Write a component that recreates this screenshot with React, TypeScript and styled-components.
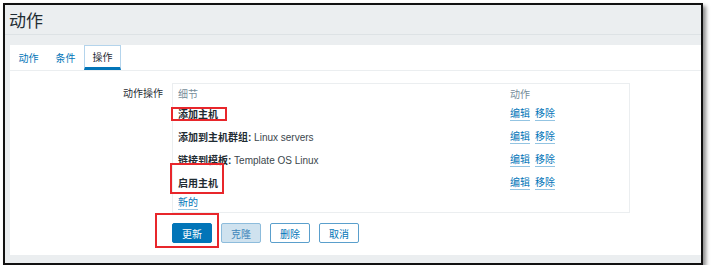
import React from 'react';
import styled, { createGlobalStyle } from 'styled-components';

const GlobalStyle = createGlobalStyle`
    body {
        margin: 0;
        background: #fff;
        font-family: "Liberation Sans", "Noto Sans CJK SC", sans-serif;
        font-size: 10px;
        color: #1f2c33;
    }
`;

const Frame = styled.div`
    position: relative;
    box-sizing: border-box;
    width: 700px;
    height: 262px;
    margin: 3px 0 0 3px;
    border: 2px solid #111;
    background: #ebeef0;
    box-shadow: 3px 3px 4px rgba(0, 0, 0, 0.45);
    display: flex;
    flex-direction: column;
    overflow: hidden;
`;
const Header = styled.div`
    height: 29px;
    padding-left: 4px;
    display: flex;
    align-items: center;
    font-size: 17px;
    color: #1f2c33;
    border-bottom: 1px solid #dde2e5;
`;
const Content = styled.div`
    margin: 10px 0 0 5px;
    height: 210px;
    background: #fff;
    display: flex;
    flex-direction: column;
`;
const TabBar = styled.div`
    display: flex;
    height: 25px;
    border-bottom: 1px solid #ebeef0;
`;
const Tab = styled.div<{ $active?: boolean }>`
    box-sizing: border-box;
    width: 37px;
    height: 25px;
    display: flex;
    align-items: center;
    justify-content: center;
    color: ${p => (p.$active ? '#1f2c33' : '#0275b8')};
    border: ${p => (p.$active ? '1px solid #b4d4ec' : 'none')};
    border-bottom: ${p => (p.$active ? '3px solid #0275b8' : 'none')};
    cursor: pointer;
`;
const Form = styled.div`
    display: grid;
    grid-template-columns: 153px auto;
    column-gap: 9px;
    row-gap: 10px;
    padding-top: 12px;
`;
const Label = styled.div`
    text-align: right;
    padding-top: 4px;
    line-height: 14px;
`;
const Table = styled.div`
    box-sizing: border-box;
    width: 458px;
    height: 130px;
    border: 1px solid #ebeef0;
    padding: 0 5px 2px;
`;
const Row = styled.div<{ $height: number; $pad?: number }>`
    box-sizing: border-box;
    display: grid;
    grid-template-columns: 332px 1fr;
    align-items: center;
    height: ${p => p.$height}px;
    padding-top: ${p => p.$pad || 0}px;
    line-height: 14px;
`;
const HeadCell = styled.div`
    color: #768d99;
`;
const Detail = styled.div`
    color: #3b464c;
`;
const Strong = styled.b`
    color: #1f2c33;
`;
const Actions = styled.div`
    display: flex;
    gap: 5px;
`;
const LinkAction = styled.span`
    display: inline-block;
    color: #0275b8;
    line-height: 12px;
    border-bottom: 1px solid #93c4e2;
    cursor: pointer;
`;
const Buttons = styled.div`
    grid-column: 2;
    display: flex;
    gap: 9px;
`;
const Button = styled.button<{ $variant: 'main' | 'alt' | 'plain' }>`
    box-sizing: border-box;
    width: 40px;
    height: 20px;
    padding: 0;
    border-radius: 2px;
    font-family: inherit;
    font-size: 10px;
    cursor: pointer;
    border: 1px solid ${p => (p.$variant === 'main' ? '#0275b8' : p.$variant === 'alt' ? '#8dbcdc' : '#5a9fcc')};
    background: ${p => (p.$variant === 'main' ? '#0275b8' : p.$variant === 'alt' ? '#cfe2ef' : '#fff')};
    color: ${p => (p.$variant === 'main' ? '#fff' : p.$variant === 'alt' ? '#3f86ba' : '#0275b8')};
`;
const Mark = styled.div<{ $x: number; $y: number; $w: number; $h: number }>`
    position: absolute;
    box-sizing: border-box;
    left: ${p => p.$x}px;
    top: ${p => p.$y}px;
    width: ${p => p.$w}px;
    height: ${p => p.$h}px;
    border: 2px solid #e8262b;
    pointer-events: none;
`;

type Operation = {
    title: string,
    value?: string,
}
const operations: Operation[] = [
    { title: '添加主机' },
    { title: '添加到主机群组', value: 'Linux servers' },
    { title: '链接到模板', value: 'Template OS Linux' },
    { title: '启用主机' },
]

const App = () => {
    return (
        <>
            <GlobalStyle />
            <Frame>
                <Header>动作</Header>
                <Content>
                    <TabBar>
                        <Tab>动作</Tab>
                        <Tab>条件</Tab>
                        <Tab $active>操作</Tab>
                    </TabBar>
                    <Form>
                        <Label>动作操作</Label>
                        <Table>
                            <Row $height={19} $pad={3}>
                                <HeadCell>细节</HeadCell>
                                <HeadCell>动作</HeadCell>
                            </Row>
                            {
                                operations.map(op => (
                                    <Row $height={23} key={op.title}>
                                        <Detail>
                                            <Strong>{op.value ? op.title + ':' : op.title}</Strong>
                                            {op.value && ' ' + op.value}
                                        </Detail>
                                        <Actions>
                                            <LinkAction>编辑</LinkAction>
                                            <LinkAction>移除</LinkAction>
                                        </Actions>
                                    </Row>
                                ))
                            }
                            <Row $height={15}>
                                <div>
                                    <LinkAction>新的</LinkAction>
                                </div>
                            </Row>
                        </Table>
                        <Buttons>
                            <Button $variant="main">更新</Button>
                            <Button $variant="alt">克隆</Button>
                            <Button $variant="plain">删除</Button>
                            <Button $variant="plain">取消</Button>
                        </Buttons>
                    </Form>
                </Content>
                <Mark $x={166} $y={102} $w={56} $h={14} />
                <Mark $x={165} $y={158} $w={54} $h={31} />
                <Mark $x={150} $y={208} $w={64} $h={35} />
            </Frame>
        </>
    )
}

export default App;
